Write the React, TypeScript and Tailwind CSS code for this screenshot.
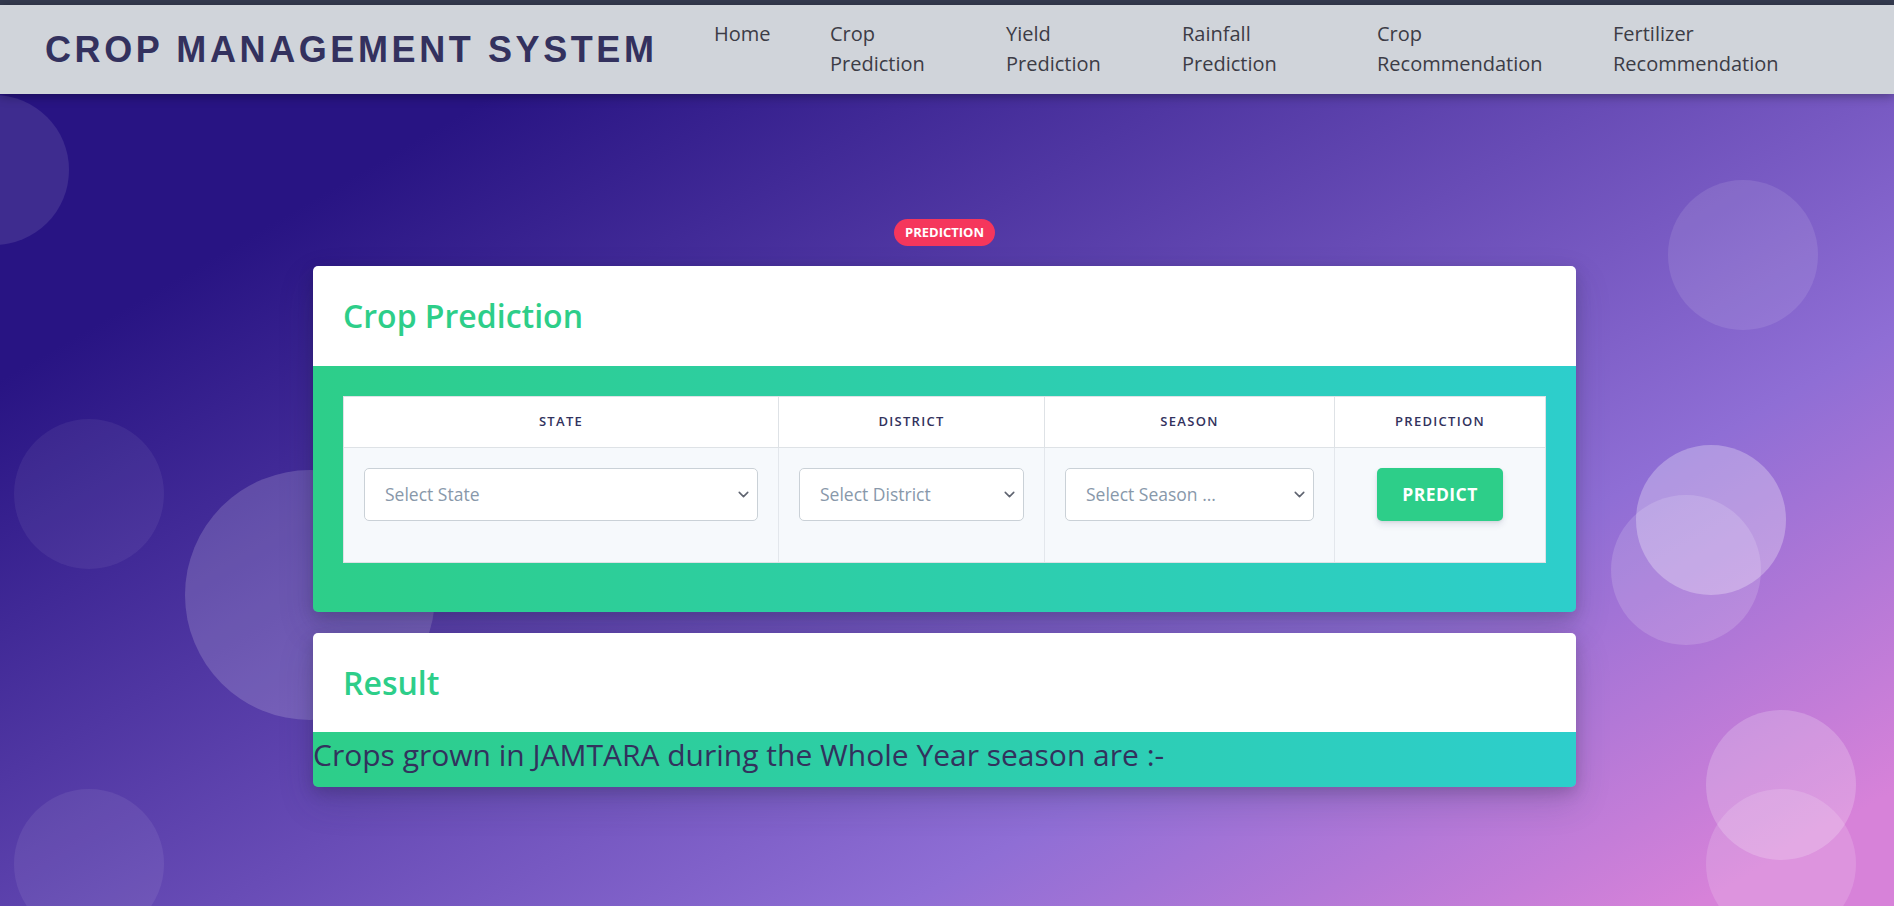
import { ChevronDown } from "lucide-react"

const navItems = [
  { lines: ["Home"], w: "w-[116px]" },
  { lines: ["Crop", "Prediction"], w: "w-[176px]" },
  { lines: ["Yield", "Prediction"], w: "w-[176px]" },
  { lines: ["Rainfall", "Prediction"], w: "w-[195px]" },
  { lines: ["Crop", "Recommendation"], w: "w-[236px]" },
  { lines: ["Fertilizer", "Recommendation"], w: "w-[200px]" },
]

// background bubbles (argon style shapes)
const bubbles = [
  "left-[-81px] top-[1px] w-[150px] h-[150px] bg-white/10",
  "left-[14px] top-[325px] w-[150px] h-[150px] bg-white/[0.06]",
  "left-[185px] top-[376px] w-[250px] h-[250px] bg-white/[0.17]",
  "left-[14px] top-[695px] w-[150px] h-[150px] bg-white/[0.07]",
  "left-[1668px] top-[86px] w-[150px] h-[150px] bg-white/10",
  "left-[1611px] top-[401px] w-[150px] h-[150px] bg-white/[0.15]",
  "left-[1636px] top-[351px] w-[150px] h-[150px] bg-white/[0.28]",
  "left-[1706px] top-[616px] w-[150px] h-[150px] bg-white/[0.2]",
  "left-[1706px] top-[695px] w-[150px] h-[150px] bg-white/[0.15]",
]

function Select({ placeholder }: { placeholder: string }) {
  return (
    <div className="relative">
      <select
        defaultValue=""
        className="block h-[53px] w-full appearance-none rounded-[5px] border border-[#cad1d7] bg-white pl-[20px] pr-[30px] text-[17.5px] text-[#8898aa] outline-none"
      >
        <option value="" disabled>
          {placeholder}
        </option>
      </select>
      <ChevronDown
        className="pointer-events-none absolute right-[6px] top-[18px] h-[17px] w-[17px] text-[#5f6470]"
        strokeWidth={2.2}
      />
    </div>
  )
}

export default function App() {
  return (
    <div className="flex h-[906px] flex-col overflow-hidden font-['Open_Sans',sans-serif]">
      <div className="h-[5px] bg-[#353b50]" />
      <header className="relative z-10 flex h-[89px] bg-[#d0d4da] shadow-[0_2px_10px_rgba(0,0,0,0.35)]">
        <div className="w-[714px] pl-[45px] pt-[25px]">
          <h1 className="font-['Liberation_Sans',Arial,sans-serif] text-[36px] font-bold leading-[40px] tracking-[3.6px] text-[#33315e]">
            CROP MANAGEMENT SYSTEM
          </h1>
        </div>
        <nav className="flex pt-[14px]">
          {navItems.map((item) => (
            <a key={item.lines.join(" ")} className={`${item.w} text-[20px] leading-[30px] text-[#3c3c46]`}>
              {item.lines.map((l) => (
                <span key={l} className="block">
                  {l}
                </span>
              ))}
            </a>
          ))}
        </nav>
      </header>

      <section className="relative flex-1 overflow-hidden bg-[linear-gradient(150deg,#281483_15%,#8f6ed5_70%,#d782d9_94%)]">
        {bubbles.map((b) => (
          <span key={b} className={`absolute rounded-full ${b}`} />
        ))}

        <div className="relative pl-[313px] pt-[125px]">
          <div className="flex w-[1263px] flex-col items-center">
            <span className="flex h-[27px] w-[101px] items-center justify-center rounded-full bg-[#f5365c] text-[13px] font-bold uppercase text-white">
              Prediction
            </span>

            <div className="mt-[20px] w-full overflow-hidden rounded-[5px] shadow-[0_15px_35px_rgba(50,50,93,0.2),0_5px_15px_rgba(0,0,0,0.17)]">
              <div className="flex h-[100px] items-center bg-white px-[30px]">
                <h3 className="text-[32px] font-semibold text-[#2dce89]">Crop Prediction</h3>
              </div>
              <div className="bg-[linear-gradient(87deg,#2dce89_0%,#2dcecc_100%)] px-[30px] pb-[49px] pt-[30px]">
                <div className="grid grid-cols-[435px_266px_290px_210px] border border-[#dee2e6]">
                  {["State", "District", "Season", "Prediction"].map((h, i) => (
                    <div
                      key={h}
                      className={`flex h-[51px] items-center justify-center border-b border-[#dee2e6] bg-white text-[13px] font-semibold uppercase tracking-[1.3px] text-[#32325d] ${i < 3 ? "border-r" : ""}`}
                    >
                      {h}
                    </div>
                  ))}
                  <div className="h-[114px] border-r border-[#e3e7ec] bg-[#f6f9fc] px-[20px] pt-[20px]">
                    <Select placeholder="Select State" />
                  </div>
                  <div className="h-[114px] border-r border-[#e3e7ec] bg-[#f6f9fc] px-[20px] pt-[20px]">
                    <Select placeholder="Select District" />
                  </div>
                  <div className="h-[114px] border-r border-[#e3e7ec] bg-[#f6f9fc] px-[20px] pt-[20px]">
                    <Select placeholder="Select Season ..." />
                  </div>
                  <div className="flex h-[114px] justify-center bg-[#f6f9fc] pt-[20px]">
                    <button className="h-[53px] w-[126px] rounded-[5px] bg-[#2dce89] text-[17.5px] font-bold uppercase tracking-[0.025em] text-white shadow-[0_4px_6px_rgba(50,50,93,0.11),0_1px_3px_rgba(0,0,0,0.08)]">
                      Predict
                    </button>
                  </div>
                </div>
              </div>
            </div>

            <div className="mt-[21px] w-full overflow-hidden rounded-[5px] shadow-[0_15px_35px_rgba(50,50,93,0.2),0_5px_15px_rgba(0,0,0,0.17)]">
              <div className="flex h-[99px] items-center bg-white px-[30px]">
                <h3 className="text-[32px] font-semibold text-[#2dce89]">Result</h3>
              </div>
              <div className="h-[55px] bg-[linear-gradient(87deg,#2dce89_0%,#2dcecc_100%)]">
                <p className="text-[30px] leading-[45px] text-[#32325d]">
                  Crops grown in JAMTARA during the Whole Year season are :-
                </p>
              </div>
            </div>
          </div>
        </div>
      </section>
    </div>
  )
}
